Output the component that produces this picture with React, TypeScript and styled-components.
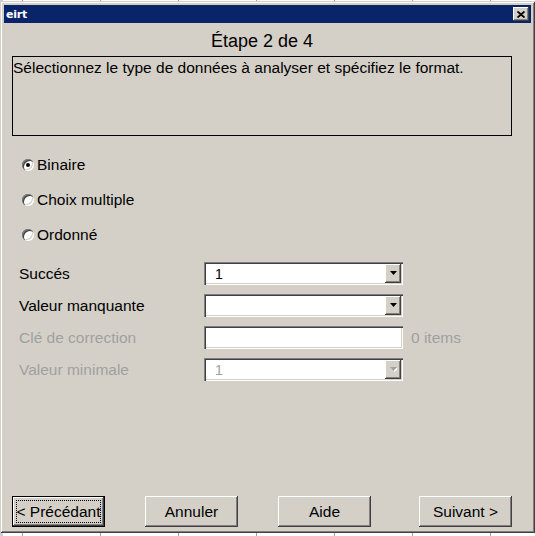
import React from "react";
import styled, { createGlobalStyle, css } from "styled-components";

const GlobalStyle = createGlobalStyle`
  html, body {
    margin: 0;
    padding: 0;
  }
  body {
    width: 535px;
    height: 536px;
    overflow: hidden;
    background-color: #ffffff;
    background-image:
      linear-gradient(to right, #c8cfe4 0, #c8cfe4 3px, transparent 3px),
      repeating-linear-gradient(to right, transparent 0, transparent 22px, #a0a0a0 22px, #a0a0a0 23px, transparent 23px, transparent 78px);
    font-family: "Liberation Sans", Arial, sans-serif;
  }
`;

const FACE = "#d4d0c8";

const Desktop = styled.div`
  padding-top: 1px;
`;

const Window = styled.div`
  box-sizing: border-box;
  width: 535px;
  height: 532px;
  padding: 4px;
  background: ${FACE};
  display: flex;
  flex-direction: column;
  box-shadow:
    inset 1px 1px 0 ${FACE},
    inset -1px -1px 0 #404040,
    inset 2px 2px 0 #ffffff,
    inset -2px -2px 0 #808080;
`;

const TitleBar = styled.div`
  height: 18px;
  flex: none;
  background: #0a246a;
  display: flex;
  align-items: center;
  justify-content: space-between;
  padding: 0 2px 0 2px;
`;

const TitleText = styled.span`
  color: #ffffff;
  font-family: "DejaVu Sans", Verdana, sans-serif;
  font-weight: bold;
  font-size: 11px;
  letter-spacing: -0.2px;
`;

const raised = css`
  background: ${FACE};
  box-shadow:
    inset -1px -1px 0 #404040,
    inset 1px 1px 0 #ffffff,
    inset -2px -2px 0 #808080,
    inset 2px 2px 0 ${FACE};
`;

const CloseButton = styled.div`
  ${raised};
  width: 16px;
  height: 14px;
  display: flex;
  align-items: center;
  justify-content: center;
`;

const Body = styled.div`
  flex: 1;
  display: flex;
  flex-direction: column;
  padding: 0 19px 2px 8px;
  color: #000000;
  font-size: 15.5px;
`;

const Heading = styled.div`
  padding-top: 6px;
  margin-bottom: 3px;
  line-height: 24px;
  font-size: 18px;
  text-align: center;
`;

const DescBox = styled.div`
  box-sizing: border-box;
  height: 80px;
  border: 1px solid #000000;
  padding: 2px 0 0 0;
  line-height: 18px;
`;

const RadioGroup = styled.div`
  padding: 11px 0 0 10px;
  display: flex;
  flex-direction: column;
`;

const RadioRow = styled.label`
  height: 35px;
  display: flex;
  align-items: center;
  gap: 3px;
`;

const RadioCircle = styled.span<{ $checked?: boolean }>`
  width: 12px;
  height: 12px;
  border-radius: 50%;
  background: #ffffff;
  box-sizing: border-box;
  box-shadow:
    inset 1px 1px 0 #808080,
    inset 2px 2px 0 #404040,
    inset -1px -1px 0 #ffffff,
    inset -2px -2px 0 ${FACE};
  display: flex;
  align-items: center;
  justify-content: center;
  &::after {
    content: "";
    width: 4px;
    height: 4px;
    border-radius: 50%;
    background: ${(p) => (p.$checked ? "#000000" : "transparent")};
  }
`;

const Form = styled.div`
  margin-top: 10px;
  padding-left: 7px;
  display: grid;
  grid-template-columns: 177px 199px auto;
  grid-auto-rows: 23px;
  row-gap: 9px;
  column-gap: 8px;
  align-items: center;
`;

const FieldLabel = styled.span<{ $disabled?: boolean }>`
  color: ${(p) => (p.$disabled ? "#a0a0a0" : "#000000")};
`;

const sunken = css`
  box-sizing: border-box;
  height: 23px;
  background: #ffffff;
  box-shadow:
    inset 1px 1px 0 #808080,
    inset 2px 2px 0 #404040,
    inset -1px -1px 0 #ffffff,
    inset -2px -2px 0 ${FACE};
`;

const Combo = styled.div<{ $disabled?: boolean }>`
  ${sunken};
  display: flex;
  align-items: center;
  padding: 2px;
  color: ${(p) => (p.$disabled ? "#a0a0a0" : "#000000")};
`;

const ComboValue = styled.span`
  flex: 1;
  padding-left: 9px;
  font-size: 14px;
`;

const DropButton = styled.span`
  ${raised};
  width: 16px;
  height: 19px;
  display: flex;
  align-items: center;
  justify-content: center;
`;

const TextField = styled.div`
  ${sunken};
`;

const ItemsNote = styled.span`
  color: #a0a0a0;
`;

const Spacer = styled.div`
  flex: 1;
`;

const ButtonRow = styled.div`
  display: flex;
  gap: 40px;
  & > :last-child {
    margin-left: auto;
  }
`;

const Button = styled.button<{ $default?: boolean }>`
  box-sizing: border-box;
  width: 93px;
  height: 31px;
  border: none;
  margin: 0;
  padding: 0;
  font-family: inherit;
  font-size: 15.5px;
  color: #000000;
  position: relative;
  ${raised};
  ${(p) =>
    p.$default &&
    css`
      box-shadow:
        inset 0 0 0 1px #000000,
        inset -2px -2px 0 #404040,
        inset 2px 2px 0 #ffffff,
        inset -3px -3px 0 #808080;
      &::after {
        content: "";
        position: absolute;
        inset: 4px;
        border: 1px dotted #000000;
      }
    `}
`;

const Arrow: React.FC<{ disabled?: boolean }> = ({ disabled }) => (
  <svg width="7" height="5" viewBox="0 0 7 5">
    {disabled && <path d="M1 1h7L4.5 5z" fill="#ffffff" />}
    <path d="M0 0h7L3.5 4z" fill={disabled ? "#a0a0a0" : "#000000"} />
  </svg>
);

const App: React.FC = () => (
  <>
    <GlobalStyle />
    <Desktop>
      <Window>
        <TitleBar>
          <TitleText>eirt</TitleText>
          <CloseButton>
            <svg width="8" height="7" viewBox="0 0 8 7">
              <path d="M0.5 0.5L7.5 6.5M7.5 0.5L0.5 6.5" stroke="#000" strokeWidth="1.8" />
            </svg>
          </CloseButton>
        </TitleBar>
        <Body>
          <Heading>Étape 2 de 4</Heading>
          <DescBox>Sélectionnez le type de données à analyser et spécifiez le format.</DescBox>
          <RadioGroup>
            <RadioRow>
              <RadioCircle $checked />
              Binaire
            </RadioRow>
            <RadioRow>
              <RadioCircle />
              Choix multiple
            </RadioRow>
            <RadioRow>
              <RadioCircle />
              Ordonné
            </RadioRow>
          </RadioGroup>
          <Form>
            <FieldLabel>Succés</FieldLabel>
            <Combo>
              <ComboValue>1</ComboValue>
              <DropButton>
                <Arrow />
              </DropButton>
            </Combo>
            <span />
            <FieldLabel>Valeur manquante</FieldLabel>
            <Combo>
              <ComboValue />
              <DropButton>
                <Arrow />
              </DropButton>
            </Combo>
            <span />
            <FieldLabel $disabled>Clé de correction</FieldLabel>
            <TextField />
            <ItemsNote>0 items</ItemsNote>
            <FieldLabel $disabled>Valeur minimale</FieldLabel>
            <Combo $disabled>
              <ComboValue>1</ComboValue>
              <DropButton>
                <Arrow disabled />
              </DropButton>
            </Combo>
            <span />
          </Form>
          <Spacer />
          <ButtonRow>
            <Button $default>&lt; Précédant</Button>
            <Button>Annuler</Button>
            <Button>Aide</Button>
            <Button>Suivant &gt;</Button>
          </ButtonRow>
        </Body>
      </Window>
    </Desktop>
  </>
);

export default App;
